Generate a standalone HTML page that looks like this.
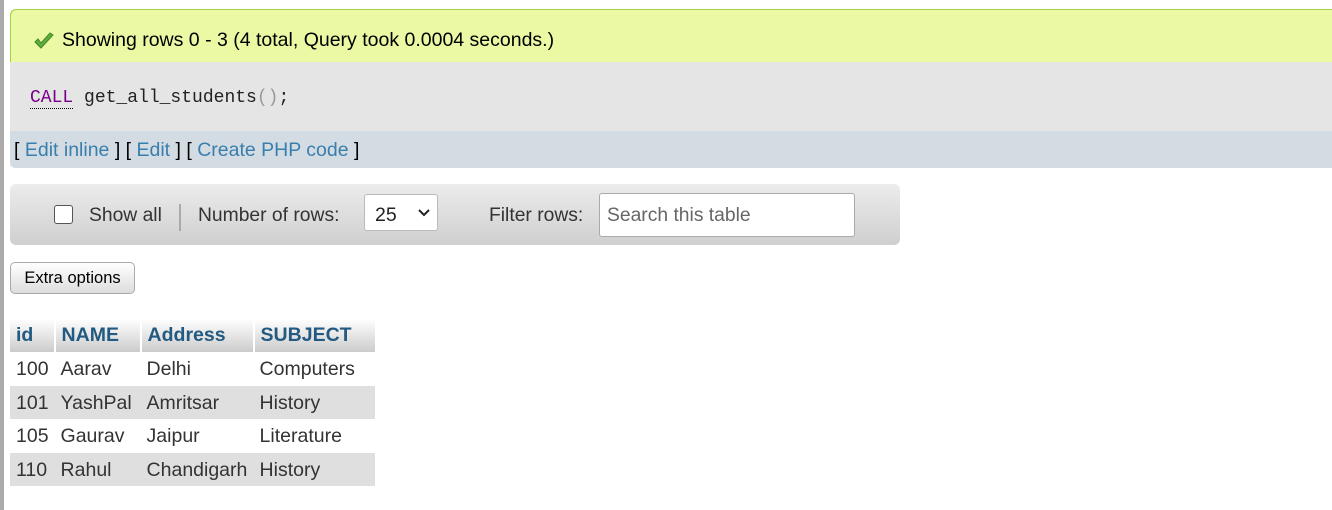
<!DOCTYPE html>
<html><head><style>
body{margin:0;width:1332px;height:510px;background:#fff;font-family:"Liberation Sans",Arial,sans-serif;position:relative;overflow:hidden;color:#333}
.a{position:absolute}
.strip{left:0;top:0;width:4px;height:510px;background:#aaa}
.ok{left:10px;top:9px;width:1322px;height:53px;background:#ebf8a4;border-top:1px solid #a2d246;border-left:1px solid #a2d246;border-top-left-radius:6px;box-sizing:border-box}
.ok span{position:absolute;left:51px;top:19px;font-size:19.5px;color:#000}
.code{left:10px;top:62px;width:1322px;height:69px;background:#e5e5e5}
.code span{position:absolute;left:20px;top:26px;font-family:"Liberation Mono",monospace;font-size:18px;color:#222}
.links{left:10px;top:131px;width:1322px;height:37px;background:#d3dce3;border-bottom-left-radius:5px}
.links span{position:absolute;left:4px;top:8px;font-size:19.5px;color:#000}
.links a{text-decoration:none;color:#3a7ead}
.tb{left:10px;top:184px;width:890px;height:61px;border-radius:6px;background:linear-gradient(#ececec,#cfcfcf)}
.tb .t{position:absolute;top:21px;font-size:19.3px;color:#333}
.btn{left:10px;top:262px;width:125px;height:32px;box-sizing:border-box;border:1px solid #aaa;border-radius:5px;background:linear-gradient(#fff,#ddd);font-size:16.5px;color:#000;text-align:center;line-height:30px}
table{position:absolute;left:10px;top:319px;border-collapse:collapse;font-size:19.5px}
th{height:33px;padding:0 6px;text-align:left;color:#235a81;background:linear-gradient(#fff,#ccc);border-right:2px solid #fff;font-size:19.5px}
td{height:33.5px;padding:2px 6px 0;color:#333;box-sizing:border-box}
tr.e td{background:#dfdfdf}
</style></head><body>
<div class="a strip"></div>
<div class="a ok"><svg style="position:absolute;left:22px;top:22px" width="22" height="18" viewBox="0 0 22 18"><path d="M2 10 L8 16 L20 3 L17 1 L8 11 L5 7 Z" fill="#5fae3b" stroke="#3d8a25" stroke-width="1"/></svg><span>Showing rows 0 - 3 (4 total, Query took 0.0004 seconds.)</span></div>
<div class="a code"><span><span style="position:static;color:#770088;border-bottom:1px dotted #000">CALL</span> get_all_students<span style="position:static;color:#999">()</span>;</span></div>
<div class="a links"><span>[ <a>Edit inline</a> ] [ <a>Edit</a> ] [ <a>Create PHP code</a> ]</span></div>
<div class="a tb">
<div style="position:absolute;left:44px;top:21px;width:17px;height:17px;border:1.5px solid #555;border-radius:3px;background:#fff"></div>
<span class="t" style="left:79px">Show all</span>
<div style="position:absolute;left:169px;top:20px;width:2px;height:27px;background:#aaa"></div>
<span class="t" style="left:188px">Number of rows:</span>
<div style="position:absolute;left:354px;top:10px;width:74px;height:37px;background:#fff;border:1px solid #bbb;border-radius:3px;box-sizing:border-box"><span style="position:absolute;left:10px;top:9px;font-size:19.5px;color:#222">25</span><svg style="position:absolute;left:53px;top:14px" width="12" height="8"><path d="M1 1 L6 6 L11 1" fill="none" stroke="#222" stroke-width="2"/></svg></div>
<span class="t" style="left:479px">Filter rows:</span>
<div style="position:absolute;left:589px;top:9px;width:256px;height:44px;background:#fff;border:1px solid #aaa;border-radius:3px;box-sizing:border-box"><span style="position:absolute;left:7px;top:11px;font-size:19.3px;color:#666">Search this table</span></div>
</div>
<div class="a btn">Extra options</div>
<table>
<tr><th style="width:31px">id</th><th style="width:72px">NAME</th><th style="width:99px">Address</th><th style="width:108px;border-right:0">SUBJECT</th></tr>
<tr><td>100</td><td>Aarav</td><td>Delhi</td><td>Computers</td></tr>
<tr class="e"><td>101</td><td>YashPal</td><td>Amritsar</td><td>History</td></tr>
<tr><td>105</td><td>Gaurav</td><td>Jaipur</td><td>Literature</td></tr>
<tr class="e"><td>110</td><td>Rahul</td><td>Chandigarh</td><td>History</td></tr>
</table>
</body></html>
